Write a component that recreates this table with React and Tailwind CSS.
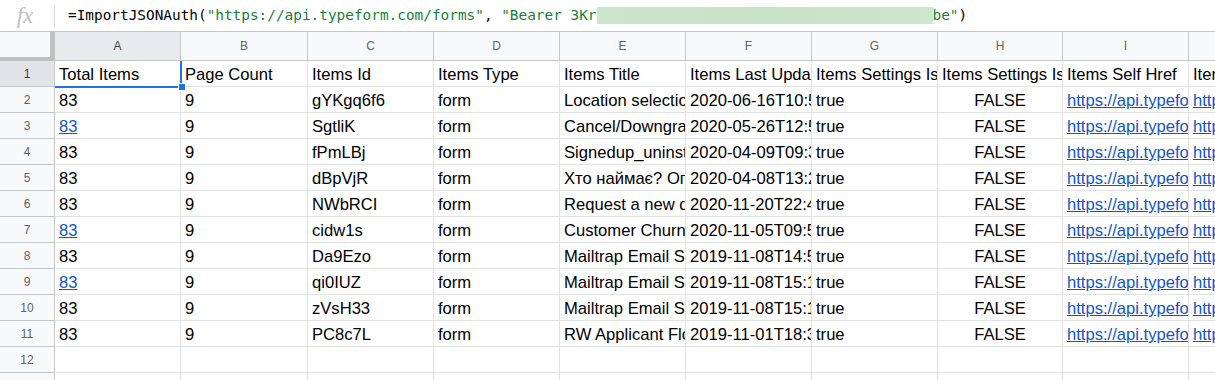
import React from 'react';

const cols = [
  { label: 'A', w: 'w-[126px]' },
  { label: 'B', w: 'w-[127px]' },
  { label: 'C', w: 'w-[126px]' },
  { label: 'D', w: 'w-[126px]' },
  { label: 'E', w: 'w-[126px]' },
  { label: 'F', w: 'w-[126px]' },
  { label: 'G', w: 'w-[126px]' },
  { label: 'H', w: 'w-[125px]' },
  { label: 'I', w: 'w-[126px]' },
  { label: 'J', w: 'w-[126px]' },
];

const header = [
  'Total Items',
  'Page Count',
  'Items Id',
  'Items Type',
  'Items Title',
  'Items Last Updated At',
  'Items Settings Is Public',
  'Items Settings Is Trial',
  'Items Self Href',
  'Items Theme Href',
];

const forms = [
  ['gYKgq6f6', 'Location selection', '2020-06-16T10:55:12+00:00', false],
  ['SgtliK', 'Cancel/Downgrade survey', '2020-05-26T12:51:40+00:00', true],
  ['fPmLBj', 'Signedup_uninstalled', '2020-04-09T09:31:02+00:00', false],
  ['dBpVjR', 'Хто наймає? Оголошення', '2020-04-08T13:22:17+00:00', false],
  ['NWbRCI', 'Request a new demo', '2020-11-20T22:41:05+00:00', false],
  ['cidw1s', 'Customer Churn Survey', '2020-11-05T09:52:33+00:00', true],
  ['Da9Ezo', 'Mailtrap Email Survey', '2019-11-08T14:59:21+00:00', false],
  ['qi0IUZ', 'Mailtrap Email Survey', '2019-11-08T15:10:44+00:00', true],
  ['zVsH33', 'Mailtrap Email Survey', '2019-11-08T15:16:09+00:00', false],
  ['PC8c7L', 'RW Applicant Flow', '2019-11-01T18:33:50+00:00', false],
];

function Cell({ col, children, className = '' }) {
  return (
    <div
      className={`${col.w} shrink-0 h-[26px] border-r border-b border-[#e2e2e2] px-[4px] pt-[2px] overflow-hidden whitespace-nowrap leading-[24px] ${className}`}
    >
      {children}
    </div>
  );
}

function RowHead({ n, active }) {
  return (
    <div
      className={`w-[55px] shrink-0 h-[26px] border-r border-b border-[#c4c7c5] flex items-center justify-center text-[12px] ${
        active ? 'bg-[#e1e3e6] text-[#3c4043]' : 'bg-[#f8f9fa] text-[#5f6368]'
      }`}
    >
      {n}
    </div>
  );
}

function Link({ children }) {
  return <span className="text-[#1155cc] underline">{children}</span>;
}

export default function App() {
  return (
    <div className="w-[1215px] h-[380px] overflow-hidden bg-white font-['Liberation_Sans',Arial,sans-serif] text-black">
      {/* formula bar */}
      <div className="h-[32px] flex items-center border-b border-[#c4c7c5]">
        <div className="w-[54px] flex justify-center pr-[4px]">
          <span className="font-['Liberation_Serif',serif] italic text-[23px] text-[#c0c0c0] leading-none">fx</span>
        </div>
        <div className="w-px h-[22px] bg-[#dadce0]" />
        <div className="pl-[13px] pt-[1px] flex items-center font-['DejaVu_Sans_Mono',monospace] text-[14.4px] whitespace-pre">
          <span>=ImportJSONAuth(</span>
          <span className="text-[#188038]">"https://api.typeform.com/forms"</span>
          <span>{', '}</span>
          <span className="text-[#188038]">"Bearer 3Kr</span>
          <span className="w-[336px] h-[17px] bg-gradient-to-r from-[#cce6cd] via-[#c6e2c7] to-[#cde7ce]" />
          <span className="text-[#188038]">be"</span>
          <span>)</span>
        </div>
      </div>

      {/* column headers */}
      <div className="flex h-[29px]">
        <div className="w-[55px] shrink-0 h-[29px] bg-[#f8f9fa] border-r-[5px] border-b-[4px] border-[#c0c0c0]" />
        {cols.map((c, i) => (
          <div
            key={c.label}
            className={`${c.w} shrink-0 h-[29px] border-r border-b border-[#c4c7c5] flex items-center justify-center text-[12px] ${
              i === 0 ? 'bg-[#e8eaed] text-[#3c4043]' : 'bg-[#f8f9fa] text-[#5f6368]'
            }`}
          >
            {c.label}
          </div>
        ))}
      </div>

      {/* row 1 */}
      <div className="flex text-[16.6px]">
        <RowHead n={1} active />
        {header.map((h, i) => (
          <div key={h} className={`relative ${cols[i].w} shrink-0`}>
            <Cell col={{ w: 'w-full' }}>{h}</Cell>
            {i === 0 && (
              <>
                <div className="absolute left-0 top-0 -right-[1px] -bottom-[1px] border-r-2 border-b-2 border-[#1a73e8] z-10" />
                <div className="absolute -right-[5px] -bottom-[4px] w-[8px] h-[8px] bg-[#1a73e8] border border-white z-20" />
              </>
            )}
          </div>
        ))}
      </div>

      {/* data rows */}
      {forms.map(([id, title, updated, linked], r) => (
        <div key={id} className="flex text-[16.6px]">
          <RowHead n={r + 2} />
          <Cell col={cols[0]}>{linked ? <Link>83</Link> : '83'}</Cell>
          <Cell col={cols[1]}>9</Cell>
          <Cell col={cols[2]}>{id}</Cell>
          <Cell col={cols[3]}>form</Cell>
          <Cell col={cols[4]}>{title}</Cell>
          <Cell col={cols[5]}>{updated}</Cell>
          <Cell col={cols[6]}>true</Cell>
          <Cell col={cols[7]} className="text-center">FALSE</Cell>
          <Cell col={cols[8]}>
            <Link>https://api.typeform.com/forms/{id}</Link>
          </Cell>
          <Cell col={cols[9]}>
            <Link>https://api.typeform.com/themes/default</Link>
          </Cell>
        </div>
      ))}

      {/* empty rows */}
      {[12, 13].map((n) => (
        <div key={n} className="flex">
          <RowHead n={n} />
          {cols.map((c) => (
            <Cell key={c.label} col={c} />
          ))}
        </div>
      ))}
    </div>
  );
}
